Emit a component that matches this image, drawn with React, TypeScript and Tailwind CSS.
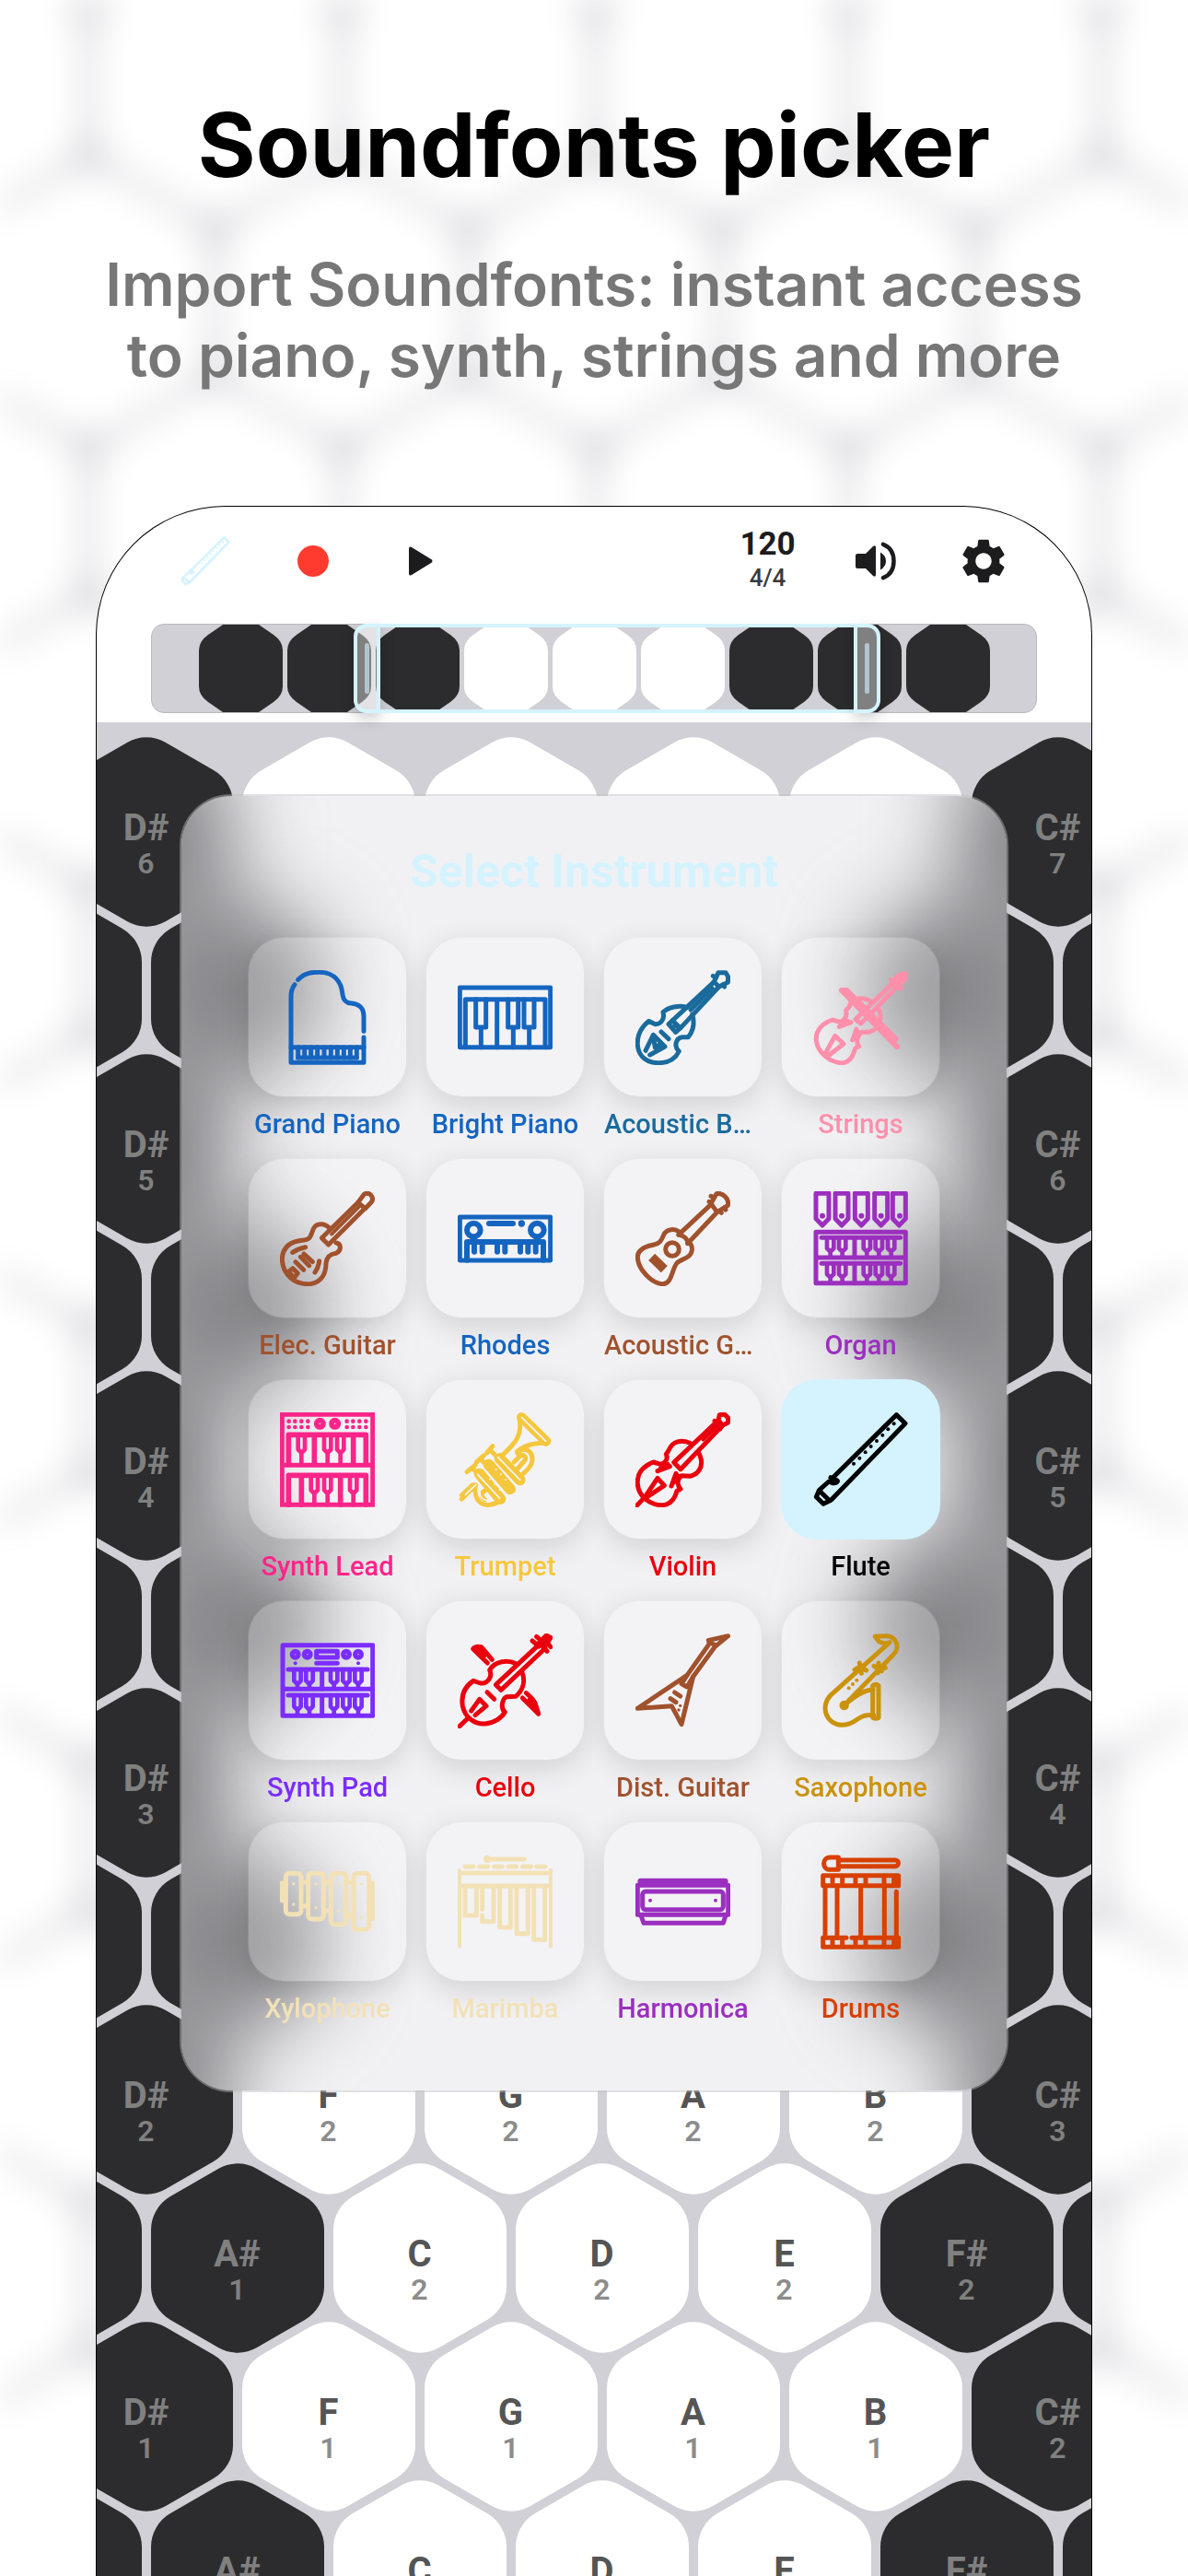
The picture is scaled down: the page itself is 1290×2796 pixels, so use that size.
import type { ReactNode } from "react";
import { MdSettings } from "react-icons/md";

type Instrument = {
  name: string;
  color: string;
  viewBox: string;
  icon: ReactNode;
  selected?: boolean;
};

type Note = { dark: boolean; note?: string; octave?: number };

// Black keys of a small keyboard: two prongs joined by a stem
function Prongs({ xs, top, bottom, end }: { xs: number[]; top: number; bottom: number; end: number }) {
  return (
    <>
      {xs.map((x) => (
        <path
          key={x}
          strokeWidth="14"
          d={`M${x - 11} ${top}V${bottom - 8}L${x - 3} ${bottom}H${x + 3}L${x + 11} ${bottom - 8}V${top}M${x} ${bottom}V${end}`}
        />
      ))}
    </>
  );
}

function Dots({ points, r }: { points: number[][]; r: number }) {
  return (
    <>
      {points.map(([x, y]) => (
        <circle key={`${x}-${y}`} cx={x} cy={y} r={r} fill="currentColor" stroke="none" />
      ))}
    </>
  );
}

const fluteIcon = (
  <>
    <path d="M790 370L998 164L1027 192L785 442L760 454L737 431L746 410L778 381L790 386Q806 388 805 378Z" />
    <path d="M748 412L778 441" />
    <path d="M784 368L806 381" />
    <Dots
      r={6}
      points={[[990, 193], [971, 211], [953, 230], [934, 249], [915, 267], [897, 286], [878, 305], [859, 323]]}
    />
  </>
);

const instruments: Instrument[] = [
  {
    name: "Grand Piano",
    color: "text-[#1565c0]",
    viewBox: "162 156 309 309",
    icon: (
      <>
        <path d="M221 187C245 162 270 163 290 163C340 163 362 195 366 235C369 258 380 263 395 264C420 266 435 280 435 305V355" />
        <path d="M435 375V457H198V240C198 222 203 212 210 203" />
        <path d="M198 407H435M221 441H412" />
        <path d="M221 407V441M242 407V441M263 407V441M284 407V441M306 407V441M328 407V441M349 407V441M370 407V441M391 407V441M412 407V441" />
      </>
    ),
  },
  {
    name: "Bright Piano",
    color: "text-[#1565c0]",
    viewBox: "741 156 309 309",
    icon: (
      <>
        <path d="M748 213H1043V407H748Z" />
        <path d="M766 407V251H1026V407M869 251V407" />
        <path d="M800 251V342H833V251M817 342V407M905 251V342H938V251M922 342V407M957 251V342H990V251M974 342V407" />
      </>
    ),
  },
  {
    name: "Acoustic Bass",
    color: "text-[#1a6b9c]",
    viewBox: "150 156 309 309",
    icon: (
      <>
        <path d="M318 277C290 270 258 276 240 293C246 312 235 332 215 332L193 322C165 345 155 370 157 400C160 440 190 458 225 458C258 458 280 445 292 420C275 405 280 378 302 374L322 374C342 350 342 320 335 300" />
        <path d="M404 196L258 332L281 358L298 343L422 210" />
        <path d="M270 320L296 344M278 336L296 344M330 285L400 215" />
        <path d="M406 194L420 164L444 164L452 178L451 196L422 210Z" />
        <path d="M403 175L412 180M440 210L434 204" />
        <path d="M208 367L183 418M208 367L246 405L197 432M208 372L214 408L226 400" />
        <path d="M234 357L258 380" />
      </>
    ),
  },
  {
    name: "Strings",
    color: "text-[#ff8fab]",
    viewBox: "727 156 309 309",
    icon: (
      <>
        <path d="M920 262C895 242 850 243 845 275L834 287C838 305 832 318 815 325L789 318C750 332 735 355 737 385C742 430 790 460 825 458C855 452 858 425 865 410L876 404C866 392 870 372 884 358L908 358C935 350 948 330 946 305C945 295 942 285 938 280" />
        <path d="M812 340L850 326M818 332L840 322M855 384L868 348M862 378L872 356" />
        <path d="M865 316L985 200M865 316L882 330L1003 208" />
        <path strokeWidth="22" d="M985 200L1003 178L1025 170L1022 185L1000 204Z" />
        <path d="M980 187L990 195M1006 214L1014 214" />
        <path strokeWidth="18" d="M820 222L1000 405M836 222L996 380M820 222H836" />
        <path d="M764 432L798 370L826 396L772 438Z" />
      </>
    ),
  },
  {
    name: "Elec. Guitar",
    color: "text-[#a0522d]",
    viewBox: "162 876 309 309",
    icon: (
      <>
        <path d="M325 998C308 978 280 978 270 1000C262 1022 262 1032 240 1035C200 1038 170 1055 169 1098C172 1150 210 1180 260 1178C300 1172 312 1140 312 1110C315 1085 330 1080 345 1078C363 1070 362 1046 345 1044" />
        <path d="M416 913L298 1028L320 1050L438 932" />
        <path d="M416 913L436 886Q448 878 458 888Q468 900 460 911L440 932Z" />
        <path strokeWidth="11" d="M424 922L330 1016" />
        <path d="M203 1075Q222 1062 245 1058M276 1140Q287 1125 290 1103" />
        <path d="M240 1080L268 1106M229 1090L257 1118M213 1106L239 1132" />
        <path d="M190 1138L204 1127L220 1143L208 1158Z" />
      </>
    ),
  },
  {
    name: "Rhodes",
    color: "text-[#1565c0]",
    viewBox: "741 876 309 309",
    icon: (
      <>
        <path d="M748 960H1043V1101H748Z" />
        <circle cx="793" cy="1002" r="22" strokeWidth="18" />
        <circle cx="1000" cy="1002" r="22" strokeWidth="18" />
        <path strokeWidth="18" d="M843 981H921M771 1100V1041H1020V1100" />
        <path strokeWidth="18" d="M795 1041V1073M821 1041V1073M870 1041V1073M895 1041V1073M945 1041V1073M970 1041V1073M995 1041V1073" />
        <Dots r={11} points={[[949, 981]]} />
      </>
    ),
  },
  {
    name: "Acoustic Guitar",
    color: "text-[#a0522d]",
    viewBox: "150 876 309 309",
    icon: (
      <>
        <path d="M292 1008C280 998 252 996 242 1018C234 1038 228 1046 210 1050C185 1055 157 1065 157 1090C157 1130 205 1178 240 1178C270 1175 268 1130 285 1110C295 1096 330 1097 334 1068C335 1055 330 1045 322 1042" />
        <circle cx="270" cy="1065" r="22" />
        <path strokeWidth="30" strokeLinecap="butt" d="M203 1090L244 1130" />
        <path d="M395 920L290 1018C308 1020 320 1030 320 1046L418 942" />
        <path d="M396 916L414 884Q430 880 443 894Q455 906 451 922L416 944Z" />
        <path d="M396 892L404 896M390 910L398 912M430 946L424 940M444 936L440 930" />
      </>
    ),
  },
  {
    name: "Organ",
    color: "text-[#9b2fbf]",
    viewBox: "727 876 309 309",
    icon: (
      <>
        {[0, 63, 127, 191, 250].map((x) => (
          <path key={x} d={`M${736 + x} 883H${778 + x}V965L${757 + x} 987L${736 + x} 965Z`} />
        ))}
        <Dots r={9} points={[[757, 956], [820, 956], [884, 956], [948, 956], [1009, 956]]} />
        <path d="M736 1009H1028V1175H736ZM736 1092H1028" />
        <path d="M754 1027H1011M862 1027V1092M754 1111H1011M862 1111V1175" />
        <Prongs xs={[783, 822, 902, 941, 981]} top={1027} bottom={1070} end={1085} />
        <Prongs xs={[783, 822, 902, 941, 981]} top={1111} bottom={1154} end={1170} />
      </>
    ),
  },
  {
    name: "Synth Lead",
    color: "text-[#fb2489]",
    viewBox: "162 156 309 309",
    icon: (
      <>
        <path strokeLinejoin="miter" d="M169 163H464V457H169ZM169 328H464" />
        <Dots
          r={7}
          points={[191, 211, 232, 253, 380, 400, 421, 442].flatMap((x) => [[x, 185], [x, 204]])}
        />
        <circle cx="292" cy="193" r="11" strokeWidth="17" />
        <circle cx="341" cy="193" r="11" strokeWidth="17" />
        <path strokeWidth="17" d="M190 325V229H442V325M274 229V325M401 229V325" />
        <path strokeWidth="17" d="M190 457V361H442V457M232 361V457M359 361V457" />
        <Prongs xs={[232, 317, 359]} top={229} bottom={285} end={325} />
        <Prongs xs={[274, 317, 401]} top={361} bottom={417} end={457} />
      </>
    ),
  },
  {
    name: "Trumpet",
    color: "text-[#f5c73d]",
    viewBox: "741 156 309 309",
    icon: (
      <>
        <path strokeWidth="32" d="M949 172L1029 250" />
        <path d="M943 180C950 232 930 255 886 296M1020 256C985 258 960 262 934 284" />
        <path d="M936 290C955 265 985 278 984 312C982 332 968 342 946 364M924 318L942 300C956 290 968 302 958 314L934 342" />
        <path strokeWidth="36" d="M812 356L880 438M842 326L912 406M878 306L944 376" />
        <path d="M771 350L799 327M802 318L826 297M836 288L855 266M788 338L808 356M814 308L840 330M846 278L870 302" />
        <path d="M754 438L800 393M754 426L790 392M798 395C794 440 815 460 845 457C865 455 875 448 886 440" />
        <path d="M830 440C812 430 820 412 832 410" />
        <g className="text-[#f4f4f6]" strokeWidth="5">
          <path d="M950 173L1028 250M806 358L878 436M872 302L944 376" />
          <path d="M812 410C812 434 826 446 846 442M766 424L800 392" />
        </g>
        <g className="text-[#f4f4f6]">
          <Dots r={3} points={[[846, 374], [862, 390], [878, 408], [866, 342], [882, 358], [898, 376]]} />
        </g>
      </>
    ),
  },
  {
    name: "Violin",
    color: "text-[#ea000d]",
    viewBox: "150 156 309 309",
    icon: (
      <>
        <path d="M332 258C300 242 270 250 258 280L250 292C258 310 245 322 232 325L208 318C170 335 155 355 157 390C160 430 200 460 240 458C270 455 280 430 285 412L297 406C285 392 285 375 300 362L328 364C355 358 368 335 364 310C362 300 360 292 354 284" />
        <path d="M222 347L262 332M232 338L256 326M267 396L282 355M275 384L290 364" />
        <path d="M420 182L275 319L297 341L434 198" />
        <path strokeWidth="11" d="M420 196L370 245" />
        <path d="M420 182L424 164L440 162L452 174L451 190L434 198Z" />
        <path d="M408 184L416 190M426 210L430 202" />
        <path d="M153 461L180 433L222 370L244 394L184 434" />
      </>
    ),
  },
  { name: "Flute", color: "text-black", viewBox: "727 156 309 309", icon: fluteIcon, selected: true },
  {
    name: "Synth Pad",
    color: "text-[#7b2cff]",
    viewBox: "162 876 309 309",
    icon: (
      <>
        <path d="M171 914H464V1144H171ZM171 1057H464" />
        <circle cx="212" cy="944" r="10" strokeWidth="16" />
        <circle cx="251" cy="944" r="10" strokeWidth="16" />
        <circle cx="378" cy="944" r="10" strokeWidth="16" />
        <circle cx="417" cy="944" r="10" strokeWidth="16" />
        <path d="M281 934H349V954H281ZM281 973H349" />
        <Dots r={6} points={[[212, 973], [417, 973]]} />
        <path d="M189 993H447M299 993V1057M189 1077H447M299 1077V1144" />
        <Prongs xs={[219, 258, 338, 378, 417]} top={993} bottom={1038} end={1052} />
        <Prongs xs={[219, 258, 338, 378, 417]} top={1077} bottom={1122} end={1138} />
      </>
    ),
  },
  {
    name: "Cello",
    color: "text-[#ea000d]",
    viewBox: "741 876 309 309",
    icon: (
      <>
        <path d="M932 975C905 960 862 965 845 995C855 1015 840 1040 815 1038L792 1030C762 1050 752 1080 757 1112C765 1150 795 1172 830 1170C860 1168 885 1150 895 1132C880 1120 885 1090 900 1082L930 1081C955 1060 962 1030 950 1000" />
        <path d="M1008 910L865 1043L882 1060L1026 924" />
        <path strokeWidth="18" d="M1008 906L1030 884L1042 890L1024 916Z" />
        <path d="M984 900L1006 918M998 886L1016 902M1032 934L1020 922M1044 920L1032 906" />
        <path d="M747 1178L774 1152M785 1128L812 1090L834 1112L798 1142" />
        <path d="M837 1067L860 1090" />
        <path d="M838 972L791 926Q800 916 818 920L853 961M805 926L828 948" />
        <path d="M952 1086L1004 1138L994 1105Q990 1092 964 1070M975 1092L996 1116" />
      </>
    ),
  },
  {
    name: "Dist. Guitar",
    color: "text-[#a0522d]",
    viewBox: "150 876 309 309",
    icon: (
      <>
        <path d="M157 1120L318 1012L392 908L388 898L452 884L408 920L338 1016L300 1172L268 1112Z" />
        <path d="M318 1012L300 1040L318 1050L338 1016M390 906L408 912" />
        <path d="M278 1068L296 1080M264 1088L282 1100" />
        <Dots r={5} points={[[296, 1111], [291, 1125]]} />
      </>
    ),
  },
  {
    name: "Saxophone",
    color: "text-[#cb920c]",
    viewBox: "727 876 309 309",
    icon: (
      <>
        <path d="M929 886L962 884C1000 882 1012 925 986 947L828 1110" />
        <path d="M929 886L942 903Q962 912 976 905L785 1076C748 1112 768 1175 825 1174C875 1170 865 1138 925 1142" />
        <path d="M922 1058C882 1062 850 1090 828 1110L850 1090" />
        <path d="M921 1046Q931 1038 940 1046V1150Q931 1156 921 1150Z" />
        <circle cx="828" cy="1110" r="8" />
        <path d="M862 994L880 984L900 996M878 972L884 1006M925 982L950 998M940 972L938 1004M948 990L962 988" />
        <Dots r={6} points={[[869, 1028], [856, 1041], [843, 1054]]} />
      </>
    ),
  },
  {
    name: "Xylophone",
    color: "text-[#f3e1b6]",
    viewBox: "162 154 309 309",
    icon: (
      <>
        <rect x="181" y="215" width="50" height="133" rx="12" />
        <rect x="254" y="215" width="50" height="149" rx="12" />
        <rect x="328" y="215" width="50" height="166" rx="12" />
        <rect x="402" y="215" width="50" height="183" rx="12" />
        <path d="M169 247V304M464 247V363M239 245H246M239 321H246M312 245H320M312 337H320M386 245H394M386 352H394" />
        <Dots r={5} points={[[206, 249], [206, 316], [279, 249], [279, 327], [353, 249], [353, 338], [427, 249], [427, 359]]} />
      </>
    ),
  },
  {
    name: "Marimba",
    color: "text-[#f3e1b6]",
    viewBox: "741 154 309 309",
    icon: (
      <>
        <path strokeWidth="12" d="M747 204V453M1044 204V453" />
        <path d="M750 214H1041M750 256H1041" />
        <path d="M765 193H792M812 193H839M859 193H886M905 193H932M952 193H980M998 193H1026" />
        <path d="M837 169H958" />
        <Dots r={13} points={[[837, 169]]} />
        <path d="M765 256V352H802V256M821 256V332M821 352V372H858V256M878 256V391H913V256M933 256V411H970V256M989 256V431H1025V256" />
      </>
    ),
  },
  {
    name: "Harmonica",
    color: "text-[#9b2fbf]",
    viewBox: "150 154 309 309",
    icon: (
      <>
        <path strokeWidth="20" d="M167 241H442" />
        <path d="M157 254H452V350H157Z" />
        <rect x="173" y="274" width="263" height="59" rx="10" />
        <path d="M169 355L177 377H436L443 355" />
        <Dots r={6} points={[[198, 303], [411, 303]]} />
      </>
    ),
  },
  {
    name: "Drums",
    color: "text-[#d84000]",
    viewBox: "727 154 309 309",
    icon: (
      <>
        <path d="M809 163V203H782C755 203 755 163 782 163Z" />
        <path d="M812 172H994C1008 172 1008 192 994 192H812" />
        <path d="M759 222H1005V255H759ZM790 222V255M822 222V255M865 222V255M898 222V255M958 222V255M990 222V255" />
        <path d="M766 255V425M805 255V425M882 255V425M959 255V425M998 275V425" />
        <path d="M835 425H759V455H1005V425H853M790 425V455M822 432V455M865 425V455M898 425V455M958 425V455M990 425V455" />
      </>
    ),
  },
];

function InstrumentIcon({ viewBox, className, children }: { viewBox: string; className: string; children: ReactNode }) {
  return (
    <svg
      viewBox={viewBox}
      className={className}
      fill="none"
      stroke="currentColor"
      strokeWidth="15"
      strokeLinecap="round"
      strokeLinejoin="round"
      aria-hidden="true"
    >
      {children}
    </svg>
  );
}

function InstrumentCard({ name, color, viewBox, icon, selected }: Instrument) {
  return (
    <button type="button" aria-pressed={!!selected} className={`flex min-w-0 flex-col items-center gap-2.5 ${color}`}>
      <span
        className={`flex h-[172px] w-full items-center justify-center rounded-[38px] ${
          selected
            ? "bg-[#d4f3ff] ring-1 ring-[#d4f3ff]"
            : "bg-white/20 shadow-[0_8px_32px_rgba(0,0,0,0.14)] ring-1 ring-white/10"
        }`}
      >
        <InstrumentIcon viewBox={viewBox} className="size-[103px]">
          {icon}
        </InstrumentIcon>
      </span>
      <span className="max-w-full truncate text-[29px] leading-10 font-medium">{name}</span>
    </button>
  );
}

const hexPath =
  "M-21 -97A42 42 0 0 1 21 -97L73 -67A42 42 0 0 1 94 -30V30A42 42 0 0 1 73 67L21 97A42 42 0 0 1 -21 97L-73 67A42 42 0 0 1 -94 30V-30A42 42 0 0 1 -73 -67Z";

function HexKey({ dark, note, octave }: Note) {
  return (
    <button type="button" className="grid h-[172px] w-[198px] shrink-0 place-items-center">
      <svg
        viewBox="-99 -109 198 218"
        className={`col-start-1 row-start-1 -my-6 h-[218px] w-[198px] ${dark ? "text-[#2c2c2e]" : "text-white"}`}
        aria-hidden="true"
      >
        <path fill="currentColor" d={hexPath} />
      </svg>
      {note && (
        <span className="col-start-1 row-start-1 flex flex-col items-center pt-7 font-bold">
          <span className={`text-[40px] leading-10 ${dark ? "text-[#808080]" : "text-[#555555]"}`}>{note}</span>
          <span className={`text-[32px] leading-9 font-semibold ${dark ? "text-[#808080]" : "text-[#8c8c8c]"}`}>
            {octave}
          </span>
        </span>
      )}
    </button>
  );
}

const naturals = (notes: string[], octave: number, labelled: boolean): Note[] =>
  notes.map((note) => (labelled ? { dark: false, note, octave } : { dark: false }));

function Keyboard() {
  const rows: Note[][] = [6, 5, 4, 3, 2, 1].flatMap((o) => {
    // Keys behind the dialog carry no label
    const labelled = o <= 2;
    return [
      [
        { dark: true, note: "D#", octave: o },
        ...naturals(["F", "G", "A", "B"], o, labelled),
        { dark: true, note: "C#", octave: o + 1 },
      ],
      [
        { dark: true },
        labelled ? { dark: true, note: "A#", octave: o - 1 } : { dark: true },
        ...naturals(["C", "D", "E"], o, labelled),
        labelled ? { dark: true, note: "F#", octave: o } : { dark: true },
        { dark: true },
      ],
    ];
  });

  return (
    <div className="flex-1 overflow-hidden bg-[#d1d0d6] pt-[33px]">
      {rows.map((row, index) => (
        <div key={index} className="flex justify-center pl-[17px]">
          {row.map((key, i) => (
            <HexKey key={i} {...key} />
          ))}
        </div>
      ))}
    </div>
  );
}

function Toolbar() {
  const item = "flex h-[118px] w-[117px] flex-col items-center justify-center";
  return (
    <div className="flex justify-between px-[59px] text-[#1c1c1e]">
      <div className="flex">
        <button type="button" aria-label="Instrument" className={`${item} text-[#d4f3ff]`}>
          <InstrumentIcon viewBox="727 156 309 309" className="size-[54px]">
            {fluteIcon}
          </InstrumentIcon>
        </button>
        <button type="button" aria-label="Record" className={item}>
          <span className="size-[34px] rounded-full bg-[#ff3b30]"></span>
        </button>
        <button type="button" aria-label="Play" className={item}>
          <svg viewBox="0 0 26 32" className="h-8 w-[26px]" fill="currentColor" aria-hidden="true">
            <path d="M0 2.5Q0 -0.5 3 1L24.500 14.200Q26.500 16 24.500 17.800L3 31Q0 32.500 0 29.500Z" />
          </svg>
        </button>
      </div>
      <div className="flex">
        <button type="button" className={item}>
          <span className="text-[35px] leading-9 font-bold">120</span>
          <span className="text-[26px] leading-9 font-medium text-[#3a3a3c]">4/4</span>
        </button>
        <button type="button" aria-label="Volume" className={item}>
          <svg viewBox="0 0 44 42" className="h-[42px] w-11" aria-hidden="true">
            <path
              fill="currentColor"
              d="M2 13H11L19 5Q22 3 22 6.500V35.500Q22 39 19 37L11 29H2Q0 29 0 27V15Q0 13 2 13ZM27 11.500Q33 15 33 21Q33 27 27 30.500Z"
            />
            <path
              fill="none"
              stroke="currentColor"
              strokeWidth="4.500"
              strokeLinecap="round"
              d="M30 2.800C38 6 41.500 13 41.500 21C41.500 29 38 36 30 39.200"
            />
          </svg>
        </button>
        <button type="button" aria-label="Settings" className={item}>
          <MdSettings className="size-[58px]" />
        </button>
      </div>
    </div>
  );
}

function RangeStrip() {
  const keys = [true, true, true, false, false, false, true, true, true];
  const handle =
    "flex w-[29px] items-center justify-center border-4 border-[#d4f3ff] bg-white/40 shadow-[0_6px_16px_rgba(0,0,0,0.2)]";
  return (
    <div className="relative mx-[59px] mt-[9px] mb-2.5 h-[97px]">
      <div className="flex h-full justify-center gap-[5px] overflow-hidden rounded-[14px] border border-[#b9b8bd] bg-[#d1d0d6]">
        {keys.map((dark, index) => (
          <svg
            key={index}
            viewBox="0 0 91 95"
            className={`h-[95px] w-[91px] shrink-0 ${dark ? "text-[#2c2c2e]" : "text-white"}`}
            aria-hidden="true"
          >
            <path
              fill="currentColor"
              d="M26 0H65L81 11Q91 18 91 28V67Q91 77 81 84L65 95H26L10 84Q0 77 0 67V28Q0 18 10 11Z"
            />
          </svg>
        ))}
      </div>
      <div className="absolute inset-y-0 right-[170px] left-[220px] flex justify-between">
        <button type="button" aria-label="Range start" className={`${handle} rounded-l-[14px]`}>
          <span className="h-[55px] w-[5px] rounded-full bg-[#b0c6cf]"></span>
        </button>
        <span className="flex-1 border-y-4 border-[#d4f3ff]"></span>
        <button type="button" aria-label="Range end" className={`${handle} rounded-r-[14px]`}>
          <span className="h-[55px] w-[5px] rounded-full bg-[#b0c6cf]"></span>
        </button>
      </div>
    </div>
  );
}

// Frosted shadow of the dark keys along one side of the dialog
function SideShade({ className }: { className: string }) {
  const centers = [
    [-137, -133], [-38, 39], [-137, 211], [61, 211], [-38, 383], [-137, 555], [61, 555], [-38, 727],
    [-137, 899], [61, 899], [-38, 1071], [-137, 1243], [61, 1243], [-38, 1415],
  ];
  return (
    <svg
      viewBox="0 0 300 1406"
      preserveAspectRatio="none"
      className={`absolute inset-y-0 h-full w-[300px] overflow-visible text-[#858589] blur-[44px] ${className}`}
      aria-hidden="true"
    >
      {centers.map(([x, y]) => (
        <path key={`${x}-${y}`} fill="currentColor" d={hexPath} transform={`translate(${x} ${y})`} />
      ))}
    </svg>
  );
}

function InstrumentDialog() {
  return (
    <section
      role="dialog"
      aria-labelledby="dialog-title"
      className="absolute inset-x-[92px] top-[314px] rounded-[54px] outline-2 outline-[#bcbcbc]/45"
    >
      <div className="absolute inset-0 overflow-hidden rounded-[54px] bg-[#f1f1f4]">
        <SideShade className="left-0" />
        <SideShade className="right-0 -scale-x-100" />
      </div>
      <div className="relative px-[73px] pt-[46px] pb-[69px]">
        <h2 id="dialog-title" className="text-center text-[50px] leading-[72px] font-bold text-[#d4f3ff]">
          Select Instrument
        </h2>
        <div className="mt-9 grid grid-cols-4 gap-x-[22px] gap-y-[18px]">
          {instruments.map((instrument) => (
            <InstrumentCard key={instrument.name} {...instrument} />
          ))}
        </div>
      </div>
    </section>
  );
}

// Soft honeycomb behind the headline
function Honeycomb() {
  const cell =
    "M-30 -134A60 60 0 0 1 30 -134L100 -94A60 60 0 0 1 130 -42V42A60 60 0 0 1 100 94L30 134A60 60 0 0 1 -30 134L-100 94A60 60 0 0 1 -130 42V-42A60 60 0 0 1 -100 -94Z";
  const cells = [[0, 0], [275, 0], [137, 238], [0, 476], [275, 476], [137, -238]];
  return (
    <svg className="absolute inset-0 h-full w-full" aria-hidden="true">
      <defs>
        <pattern id="comb" width="275" height="476" patternUnits="userSpaceOnUse" x="234" y="90">
          <rect width="275" height="476" fill="#d8d8dd" />
          {cells.map(([x, y]) => (
            <path key={`${x}-${y}`} fill="white" d={cell} transform={`translate(${x} ${y})`} />
          ))}
        </pattern>
        <filter id="soft" x="0" y="0" width="100%" height="100%">
          <feGaussianBlur stdDeviation="18" />
        </filter>
      </defs>
      <rect width="100%" height="100%" fill="url(#comb)" filter="url(#soft)" />
    </svg>
  );
}

export default function App() {
  return (
    <main className="relative flex h-screen flex-col overflow-hidden bg-white font-['Roboto',sans-serif]">
      <Honeycomb />

      <header className="relative px-20 pt-[97px] text-center font-['Inter',sans-serif]">
        <h1 className="text-[96px] leading-[120px] font-bold text-black">Soundfonts picker</h1>
        <p className="mx-auto mt-[53px] max-w-[1100px] text-[64px] leading-[77px] font-semibold text-[#777777]">
          Import Soundfonts: instant access to piano, synth, strings and more
        </p>
      </header>

      <div className="relative mx-[104px] mt-[125px] flex min-h-0 flex-1 flex-col overflow-hidden rounded-t-[140px] border border-b-0 border-black bg-white">
        <Toolbar />
        <RangeStrip />
        <Keyboard />
        <InstrumentDialog />
      </div>
    </main>
  );
}
